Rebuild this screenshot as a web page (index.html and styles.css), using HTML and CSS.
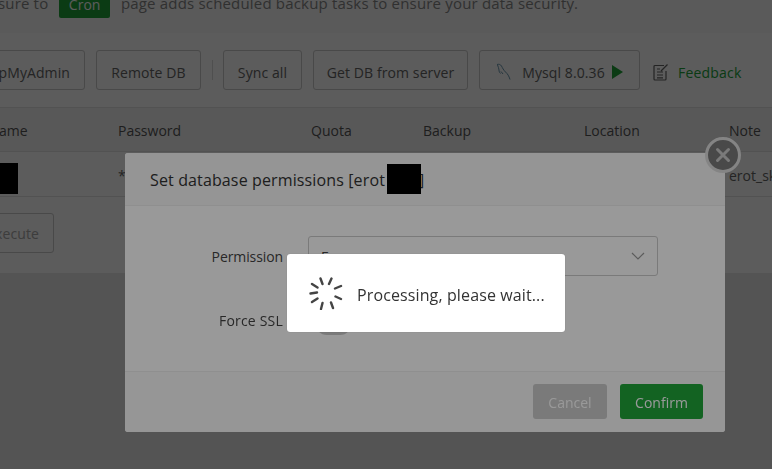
FILE: index.html
```html
<!DOCTYPE html>
<html lang="en">
<head>
<meta charset="utf-8">
<title>Set database permissions</title>
<link rel="stylesheet" href="styles.css">
</head>
<body>
<div class="page">
  <div class="notice">
    <span>Make sure to</span><span class="tag">Cron</span><span>page adds scheduled backup tasks to ensure your data security.</span>
  </div>
  <div class="panel">
    <div class="toolbar">
      <button class="btn btn-first">phpMyAdmin</button>
      <button class="btn btn-remote">Remote DB</button>
      <span class="divider"></span>
      <button class="btn btn-sync">Sync all</button>
      <button class="btn btn-get">Get DB from server</button>
      <button class="btn btn-mysql">
        <svg class="dolphin" width="16" height="18" viewBox="0 0 16 18" fill="none" stroke="#5d8fa8" stroke-width="0.9"><path d="M1 1.5c2-.6 3.5 0 4.5 1.5 1 2 2 4 4 6 2 1.800 3.500 4 4.500 7.500M1.500 2c.5 2 1.500 3 1.500 5 0 1.500.5 2.500 1.500 3.500M5 8.500l2 2.500"/></svg>
        <span>Mysql 8.0.36</span>
        <svg class="play" width="11" height="14" viewBox="0 0 11 14"><path d="M0 0l11 7-11 7z" fill="#20a53a"/></svg>
      </button>
      <div class="feedback">
        <svg width="16" height="18" viewBox="0 0 16 18" fill="none" stroke="#666" stroke-width="1.200"><path d="M11 2.500H2a1 1 0 0 0-1 1v12.500a1 1 0 0 0 1 1h10a1 1 0 0 0 1-1V8M4 9h6M4 12h6M4 14.800h6M4 6h3M8 8l6.500-6.500"/></svg>
        <span>Feedback</span>
      </div>
    </div>
    <div class="table">
      <div class="row head"><span>Username</span><span>Password</span><span>Quota</span><span>Backup</span><span>Location</span><span>Note</span></div>
      <div class="row body-row"><span class="name"><i class="redact redact-row"></i></span><span>**********</span><span></span><span></span><span></span><span>erot_sk</span></div>
    </div>
    <div class="batch"><button class="btn btn-exec">Execute</button></div>
  </div>
</div>

<div class="shade"></div>

<div class="dialog">
  <div class="dialog-head">
    <span>Set database permissions [erot</span><i class="redact redact-title"></i><span class="bracket">]</span>
  </div>
  <div class="dialog-body">
    <div class="field">
      <label>Permission</label>
      <div class="select"><span>E</span>
        <svg width="14" height="8" viewBox="0 0 14 8" fill="none" stroke="#999" stroke-width="1.200"><path d="M1 1l6 6 6-6"/></svg>
      </div>
    </div>
    <div class="field field-ssl">
      <label class="label-ssl">Force SSL</label>
      <span class="toggle"></span>
    </div>
  </div>
  <div class="dialog-foot">
    <button class="action cancel">Cancel</button>
    <button class="action confirm">Confirm</button>
  </div>
  <span class="close">
    <svg width="18" height="18" viewBox="0 0 18 18" stroke="#ccc" stroke-width="3" stroke-linecap="round"><path d="M3.500 3.500l11 11M14.500 3.500l-11 11"/></svg>
  </span>
</div>

<div class="shade shade-top"></div>

<div class="toast">
  <svg width="34" height="34" viewBox="0 0 34 34" stroke="#444" stroke-width="2.400" stroke-linecap="round">
    <path d="M11.500 2.500l2 5.500M22.500 2.500l-2.500 5.500M32 10l-6 2.500M32 23l-5.500-2.500M24 32l-2-5.500M12 33l1.500-6M3 26l5.500-3.500M1.500 17.500l6.500-1M3 8l5.500 3.500"/>
  </svg>
  <span class="toast-text">Processing, please wait...</span>
</div>
</body>
</html>
```
FILE: styles.css
```css
* { box-sizing: border-box; }
html, body {
  margin: 0;
  height: 100%;
  overflow: hidden;
  background: #ececec;
  font-family: "Open Sans", "Noto Sans", sans-serif;
  font-size: 14px;
  color: #666;
}
.page { width: 772px; overflow: hidden; }
.notice {
  margin-left: -45px;
  margin-top: -13px;
  height: 46px;
  padding-top: 6px;
  display: flex;
  gap: 10.5px;
  align-items: flex-start;
  background: #fafafa;
  font-size: 15px;
  letter-spacing: .18px;
  white-space: nowrap;
  color: #888;
}
.tag {
  background: #20a53a;
  color: #fff;
  padding: 0 10px;
  height: 25px;
  line-height: 23px;
  border-radius: 2px;
  font-size: 14px;
  letter-spacing: 0;
}
.panel { background: #fff; height: 240px; }
.toolbar {
  height: 75px;
  display: flex;
  align-items: center;
  gap: 11px;
  margin-left: -64px;
  border-bottom: 1px solid #e4e4e4;
  white-space: nowrap;
}
.btn {
  font: inherit;
  letter-spacing: .1px;
  color: #666;
  height: 40px;
  padding: 4px 0 0;
  background: #fff;
  border: 1px solid #ccc;
  border-radius: 3px;
  white-space: nowrap;
  flex: none;
}
.btn-first { width: 149px; text-align: right; padding-right: 14px; }
.btn-remote { width: 105px; }
.btn-sync { width: 79px; }
.btn-get { width: 155px; }
.divider { width: 1px; height: 20px; background: #ddd; flex: none; margin-right: -1px; }
.btn-mysql {
  width: 161px;
  display: flex;
  align-items: center;
  justify-content: center;
  gap: 8px;
}
.dolphin { margin-right: 2px; }
.play { margin-left: -1px; }
.feedback {
  display: flex;
  align-items: center;
  gap: 9px;
  color: #20a53a;
  margin-left: 2px;
  padding-top: 4px;
  letter-spacing: .2px;
}
.row {
  display: grid;
  grid-template-columns: 158px 193px 112px 161px 145px 80px;
  margin-left: -40px;
  align-items: center;
  border-bottom: 1px solid #e4e4e4;
  padding-top: 2px;
}
.head { height: 44px; background: #f5f5f5; color: #555; }
.body-row { height: 45px; }
.name { display: flex; justify-content: flex-end; padding-right: 100px; }
.redact { display: inline-block; background: #000; }
.redact-row { width: 58px; height: 31px; margin: 6px 0 0 40px; }
.batch { padding: 16px 0 0; margin-left: -56px; }
.btn-exec { width: 110px; text-align: right; padding: 0 14px 0 0; color: #aaa; }
.shade {
  position: fixed;
  inset: 0;
  background: rgba(0, 0, 0, .4);
}
.dialog {
  position: fixed;
  left: 125px;
  top: 153px;
  width: 600px;
  height: 279px;
  background: #fff;
  border-radius: 3px;
  display: flex;
  flex-direction: column;
}
.dialog-head {
  height: 53px;
  display: flex;
  align-items: center;
  padding: 2px 0 0 25px;
  font-size: 16px;
  letter-spacing: .13px;
  color: #333;
  background: #f8f8f8;
  border-bottom: 1px solid #eee;
  border-radius: 3px 3px 0 0;
  white-space: nowrap;
}
.redact-title { width: 34px; height: 30px; margin: -2px -2px 0 2px; position: relative; z-index: 1; }
.bracket { color: #333; }
.dialog-body { flex: 1; padding-top: 30px; }
.field { display: flex; align-items: center; height: 40px; color: #444; }
.field label { width: 158px; text-align: right; letter-spacing: -.1px; }
.field .label-ssl { letter-spacing: .2px; padding-bottom: 2px; }
.select {
  margin-left: 25px;
  width: 350px;
  height: 40px;
  border: 1px solid #ccc;
  border-radius: 3px;
  display: flex;
  align-items: center;
  justify-content: space-between;
  padding: 0 12px;
}
.field-ssl { margin-top: 25px; }
.toggle {
  margin: 4px 0 0 32px;
  width: 37px;
  height: 24px;
  border-radius: 12px;
  background: #ccc;
}
.dialog-foot {
  height: 61px;
  display: flex;
  justify-content: flex-end;
  align-items: center;
  gap: 13px;
  padding: 0 22px 1px 0;
  border-top: 1px solid #eee;
  background: #fbfbfb;
  border-radius: 0 0 3px 3px;
}
.action {
  font: inherit;
  height: 35px;
  border: 0;
  border-radius: 3px;
  color: #fff;
  padding: 2px 0 0;
}
.cancel { width: 74px; background: #cbcbcb; }
.confirm { width: 83px; background: #20a53a; }
.close {
  position: absolute;
  right: -16px;
  top: -16px;
  width: 36px;
  height: 36px;
  border-radius: 50%;
  background: #7a7a7a;
  border: 3px solid #ddd;
  display: flex;
  align-items: center;
  justify-content: center;
}
.toast {
  position: fixed;
  left: 287px;
  top: 254px;
  width: 278px;
  height: 78px;
  background: #fff;
  border-radius: 3px;
  box-shadow: 0 0 1px rgba(0, 0, 0, .3);
  display: flex;
  align-items: center;
  gap: 14px;
  padding-left: 22px;
  font-size: 16px;
  letter-spacing: .12px;
  color: #333;
  white-space: nowrap;
}
.toast-text { padding-top: 3px; }
```
